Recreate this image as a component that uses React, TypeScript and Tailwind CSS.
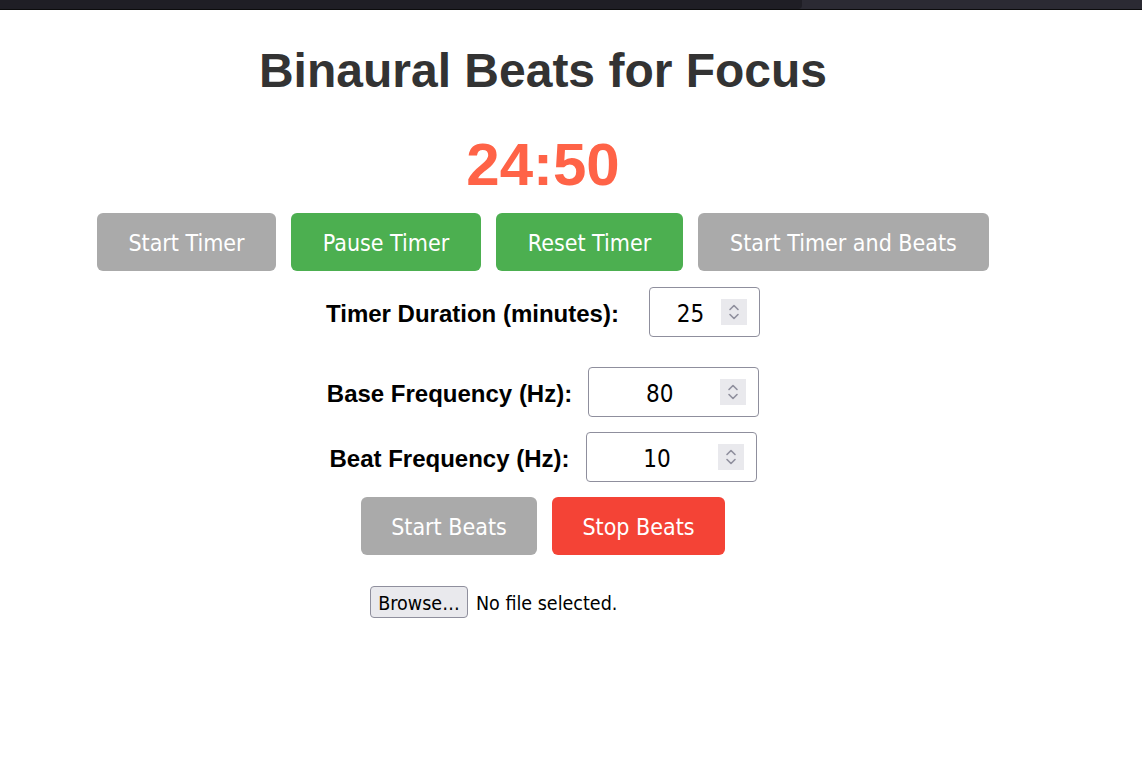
function Spinner() {
  return (
    <div className="w-[26px] h-[26px] bg-[#e9e9ed] flex items-center justify-center shrink-0">
      <svg width="14" height="18" viewBox="0 0 14 18" fill="none" stroke="#8f8f9d" strokeWidth={1.6} strokeLinecap="round" strokeLinejoin="round">
        <path d="M3 6.5 L7 2.5 L11 6.5" />
        <path d="M3 11.5 L7 15.5 L11 11.5" />
      </svg>
    </div>
  )
}

const uiFont = { fontFamily: '"DejaVu Sans Condensed", "DejaVu Sans", sans-serif' }

function NumberBox({ value, width }: { value: string; width: string }) {
  return (
    <div className={`${width} h-[50px] border border-[#8f8f9d] rounded-[4px] bg-white flex items-center pr-[12px]`}>
      <div className="flex-1 pl-[10px] pt-[3px] text-center text-[24px] text-black leading-none" style={uiFont}>
        {value}
      </div>
      <Spinner />
    </div>
  )
}

export default function App() {
  return (
    <div className="w-[1142px] h-[783px] bg-white overflow-hidden">
      {/* browser strip */}
      <div className="h-[10px] bg-[#2b2a33] border-b border-[#0c0c0d]">
        <div className="w-[802px] h-[9px] bg-[#1f1e25] rounded-br-[4px]" />
      </div>

      <div className="w-[1086px] flex flex-col items-center" style={{ fontFamily: '"Liberation Sans", Arial, sans-serif' }}>
        <h1 className="mt-[33px] text-[48px] font-bold text-[#333] leading-[55px]">
          Binaural Beats for Focus
        </h1>

        <div className="mt-[34px] text-[60px] font-bold text-[#ff6347] leading-[66px]">24:50</div>

        <div className="mt-[15px] flex gap-[15px] text-white text-[23px]" style={uiFont}>
          <button className="w-[179px] h-[58px] pt-[3px] rounded-[6px] bg-[#aaaaaa]">Start Timer</button>
          <button className="w-[190px] h-[58px] pt-[3px] rounded-[6px] bg-[#4caf50]">Pause Timer</button>
          <button className="w-[187px] h-[58px] pt-[3px] rounded-[6px] bg-[#4caf50]">Reset Timer</button>
          <button className="w-[291px] h-[58px] pt-[3px] rounded-[6px] bg-[#aaaaaa]">Start Timer and Beats</button>
        </div>

        <div className="mt-[16px] flex items-center gap-[30px]">
          <label className="pt-[3px] text-[24px] font-bold text-black">Timer Duration (minutes):</label>
          <NumberBox value="25" width="w-[111px]" />
        </div>

        <div className="mt-[30px] flex items-center gap-[16px]">
          <label className="pt-[3px] text-[24px] font-bold text-black">Base Frequency (Hz):</label>
          <NumberBox value="80" width="w-[171px]" />
        </div>

        <div className="mt-[15px] flex items-center gap-[16px]">
          <label className="pt-[3px] text-[24px] font-bold text-black">Beat Frequency (Hz):</label>
          <NumberBox value="10" width="w-[171px]" />
        </div>

        <div className="mt-[15px] flex gap-[15px] text-white text-[23px]" style={uiFont}>
          <button className="w-[176px] h-[58px] pt-[3px] rounded-[6px] bg-[#aaaaaa]">Start Beats</button>
          <button className="w-[173px] h-[58px] pt-[3px] rounded-[6px] bg-[#f44336]">Stop Beats</button>
        </div>

        <div className="mt-[31px] w-[346px] flex items-center gap-[8px] text-[19.5px] text-black" style={uiFont}>
          <button className="w-[98px] h-[32px] pt-[2px] rounded-[4px] border border-[#8f8f9d] bg-[#e9e9ed]">Browse…</button>
          <span className="pt-[3px]">No file selected.</span>
        </div>
      </div>
    </div>
  )
}
